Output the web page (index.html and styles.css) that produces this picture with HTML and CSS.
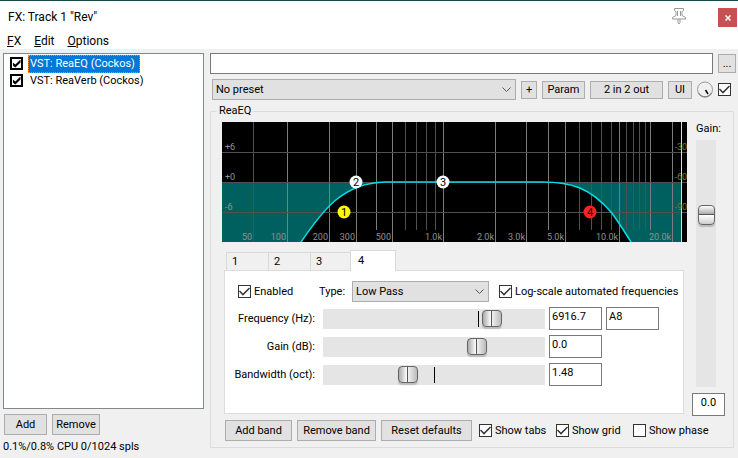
FILE: index.html
```
<!DOCTYPE html>
<html lang="en">

<head>
  <meta charset="UTF-8"/>
  <meta name="viewport" content="width=device-width, initial-scale=1"/>
  <title>FX: Track 1 "Rev"</title>

  <link rel="stylesheet" href="styles.css">
</head>

<body>
<header class="titlebar">
  <h1>FX: Track 1 "Rev"</h1>
  <svg class="pin" width="16" height="17" viewBox="0 0 16 17">
    <path d="M3.500 .5h9v2l-1.500 1v4l3.500 2v1.500h-13v-1.500l3.500-2v-4l-1.500-1zM7 11v3.500l1 1.500 1-1.500V11M6.500 3v5M9.500 3v5" fill="#fff" stroke="#999"/>
  </svg>
  <button type="button" class="close" aria-label="Close">
    <svg width="6" height="6" viewBox="0 0 6 6"><path d="M.5 .5l5 5M5.500 .5l-5 5" stroke="#fff" stroke-width="1.500"/></svg>
  </button>
</header>

<nav class="menu">
  <a href="#"><u>F</u>X</a>
  <a href="#"><u>E</u>dit</a>
  <a href="#"><u>O</u>ptions</a>
</nav>

<main>
  <section class="chain">
    <ul class="fx-list">
      <li><input type="checkbox" id="fx1" class="bold" checked><label for="fx1" class="selected">VST: ReaEQ (Cockos)</label></li>
      <li><input type="checkbox" id="fx2" class="bold" checked><label for="fx2">VST: ReaVerb (Cockos)</label></li>
    </ul>
    <div class="chain-buttons">
      <button type="button" class="add">Add</button>
      <button type="button" class="remove">Remove</button>
    </div>
    <p class="status">0.1%/0.8% CPU 0/1024 spls</p>
  </section>

  <section class="plugin">
    <div class="comment-row">
      <input type="text" aria-label="Comment">
      <button type="button">...</button>
    </div>

    <div class="preset-row">
      <select aria-label="Preset"><option>No preset</option></select>
      <button type="button" class="plus">+</button>
      <button type="button" class="param">Param</button>
      <button type="button" class="pins">2 in 2 out</button>
      <button type="button" class="ui">UI</button>
      <svg class="knob" width="16" height="18" viewBox="0 0 16 18">
        <circle cx="8" cy="8.500" r="7.500" fill="#f0f0f0" stroke="#999"/>
        <path d="M1.500 12a7.500 7.500 0 0 0 13 0" fill="none" stroke="#888" stroke-width="1.500"/>
        <path d="M8.500 9l2.500 4" stroke="#000" stroke-width="1.500"/>
      </svg>
      <input type="checkbox" aria-label="Enable plugin" checked>
    </div>

    <fieldset>
      <legend>ReaEQ</legend>
      <div class="eq">
        <div class="eq-main">
          <svg class="graph" viewBox="0 0 465 120">
            <rect width="465" height="120" fill="#000"/>
            <!-- attenuated areas -->
            <path d="M0 60H163C118 61 98 93 79 120H0zM320 60H459V120H409C402 109 396 99 389 90C368 66 350 60 320 60z" fill="#006060"/>
            <!-- frequency grid -->
            <path class="minor" d="M183.500 0V108M194.500 0V108M204.500 0V108M213.500 0V108M357.500 0V108M369.500 0V108M379.500 0V108M389.500 0V108M404.500 0V108M411.500 0V108M417.500 0V108M423.500 0V108"/>
            <path class="major" d="M65.500 0V120M107.500 0V120M134.500 0V120M154.500 0V108M170.500 0V120M221.500 0V120M273.500 0V120M304.500 0V120M326.500 0V108M343.500 0V120M397.500 0V120M428.500 0V108M450.500 0V120"/>
            <path class="minor" d="M31.500 0V120M0 30.500H465M0 60.500H465M0 90.500H465"/>
            <path d="M459.500 0V120" stroke="#ddd"/>
            <!-- response -->
            <path class="curve" d="M79 120C98 93 118 61 163 60H320C350 60 368 66 389 90C396 99 402 109 409 120"/>
            <g class="scale">
              <text x="3" y="28">+6</text>
              <text x="3" y="58">+0</text>
              <text x="3" y="88">-6</text>
              <text x="30" y="118" class="end">50</text>
              <text x="64" y="118" class="end">100</text>
              <text x="106" y="118" class="end">200</text>
              <text x="133" y="118" class="end">300</text>
              <text x="169" y="118" class="end">500</text>
              <text x="220" y="118" class="end">1.0k</text>
              <text x="272" y="118" class="end">2.0k</text>
              <text x="303" y="118" class="end">3.0k</text>
              <text x="342" y="118" class="end">5.0k</text>
              <text x="396" y="118" class="end">10.0k</text>
              <text x="449" y="118" class="end">20.0k</text>
            </g>
            <g class="scale phase">
              <text x="465" y="28" class="end">-30</text>
              <text x="465" y="58" class="end">-60</text>
              <text x="465" y="88" class="end">-90</text>
            </g>
            <g class="handles">
              <circle cx="122" cy="90" r="6.500" fill="#ff0"/><text x="122" y="94">1</text>
              <circle cx="134" cy="60" r="6.500" fill="#fff"/><text x="134" y="64">2</text>
              <circle cx="221" cy="60" r="6.500" fill="#fff"/><text x="221" y="64">3</text>
              <circle cx="368" cy="90" r="6.500" fill="#f22"/><text x="368" y="94">4</text>
            </g>
          </svg>

          <div class="tabs" role="tablist">
            <button type="button" role="tab">1</button>
            <button type="button" role="tab">2</button>
            <button type="button" role="tab">3</button>
            <button type="button" role="tab" class="active" aria-selected="true">4</button>
          </div>

          <div class="band">
            <div class="band-top">
              <div class="check enabled"><input type="checkbox" id="enabled" checked><label for="enabled">Enabled</label></div>
              <label for="type" class="type">Type:</label>
              <select id="type"><option>Low Pass</option></select>
              <div class="check"><input type="checkbox" id="log" checked><label for="log">Log-scale automated frequencies</label></div>
            </div>
            <div class="band-row">
              <label for="freq">Frequency (Hz):</label>
              <input type="range" id="freq" class="mark-high" min="0" max="1000" value="787">
              <input type="text" value="6916.7" aria-label="Frequency value">
              <input type="text" value="A8" aria-label="Note">
            </div>
            <div class="band-row">
              <label for="gain">Gain (dB):</label>
              <input type="range" id="gain" class="mark-high" min="0" max="1000" value="713">
              <input type="text" value="0.0" aria-label="Gain value">
            </div>
            <div class="band-row">
              <label for="bw">Bandwidth (oct):</label>
              <input type="range" id="bw" class="mark-mid" min="0" max="1000" value="369">
              <input type="text" value="1.48" aria-label="Bandwidth value">
            </div>
          </div>

          <div class="band-actions">
            <button type="button" class="add-band">Add band</button>
            <button type="button" class="remove-band">Remove band</button>
            <button type="button" class="reset">Reset defaults</button>
            <div class="check"><input type="checkbox" id="tabs" checked><label for="tabs">Show tabs</label></div>
            <div class="check"><input type="checkbox" id="grid" checked><label for="grid">Show grid</label></div>
            <div class="check"><input type="checkbox" id="phase"><label for="phase">Show phase</label></div>
          </div>
        </div>

        <div class="master">
          <label for="master">Gain:</label>
          <input type="range" id="master" class="vertical" min="0" max="1000" value="714">
          <input type="text" value="0.0" aria-label="Master gain value">
        </div>
      </div>
    </fieldset>
  </section>
</main>
</body>

</html>
```
FILE: styles.css
```
* {
    box-sizing: border-box;
}

body {
    display: flex;
    flex-direction: column;
    min-height: 100vh;
    margin: 0;
    border-top: 1px solid #1d4a4a;
    background: #f0f0f0;
    color: #000;
    font: 11px/14px Roboto, sans-serif;
}

button,
input,
select {
    margin: 0;
    font: inherit;
    color: inherit;
}

/* title and menu */
.titlebar {
    display: flex;
    align-items: center;
    height: 31px;
    padding: 0 1px 0 8px;
    background: #fff;
}

h1 {
    flex: 1;
    margin: 0;
    font: 12px/16px Roboto, sans-serif;
}

.pin {
    margin-right: 31px;
}

.close {
    display: flex;
    align-items: center;
    justify-content: center;
    width: 19px;
    height: 19px;
    margin-top: 2px;
    padding: 0;
    border: 0;
    background: #c75050;
}

.menu {
    display: flex;
    gap: 13px;
    height: 17px;
    padding-left: 7px;
    background: #fff;
    font: 12px/19px Roboto, sans-serif;
}

.menu a {
    color: #000;
    text-decoration: none;
}

/* common controls */
button {
    padding: 0;
    border: 1px solid #adadad;
    background: #e1e1e1;
    white-space: nowrap;
}

input[type="text"] {
    min-width: 0;
    border: 1px solid #7a7a7a;
    background: #fff;
    padding: 0 2px 4px;
}

select {
    appearance: none;
    height: 21px;
    padding: 0 3px;
    border: 1px solid #adadad;
    border-radius: 0;
    background: #e1e1e1 url("data:image/svg+xml,%3Csvg xmlns='http://www.w3.org/2000/svg' width='9' height='6'%3E%3Cpath d='M.5 .5l4 4 4-4' fill='none' stroke='%23555'/%3E%3C/svg%3E") no-repeat right 4px center;
}

input[type="checkbox"] {
    appearance: none;
    flex: none;
    display: grid;
    place-items: center;
    width: 13px;
    height: 13px;
    border: 1px solid #333;
    background: #fff;
}

input[type="checkbox"]:checked::before {
    content: "";
    width: 11px;
    height: 9px;
    background: #333;
    clip-path: polygon(0 50%, 9% 38%, 36% 72%, 91% 5%, 100% 16%, 36% 96%);
}

input.bold {
    border-width: 2px;
    border-color: #000;
}

input.bold:checked::before {
    width: 8px;
    height: 8px;
    background: #000;
    clip-path: polygon(0 35%, 36% 62%, 100% 0, 100% 38%, 36% 100%, 0 72%);
}

.check {
    display: flex;
    align-items: center;
    gap: 3px;
    white-space: nowrap;
}

/* sliders */
input[type="range"] {
    appearance: none;
    width: 100%;
    height: 20px;
    background: #e5e5e5;
}

input.mark-high {
    background: linear-gradient(#000, #000) 70% center / 1px 16px no-repeat #e5e5e5;
}

input.mark-mid {
    background: linear-gradient(#000, #000) 50% center / 1px 16px no-repeat #e5e5e5;
}

input[type="range"]::-webkit-slider-thumb {
    appearance: none;
    width: 20px;
    height: 17px;
    border: 1px solid #666;
    border-radius: 4px;
    background: linear-gradient(90deg, #aaa, #fff 45%, #555 45%, #555 52%, #eee 52%, #bbb);
    box-shadow: 0 2px 1px #bbb;
}

input[type="range"].vertical {
    writing-mode: vertical-lr;
    direction: rtl;
    width: 20px;
    height: auto;
    flex: 1;
}

input[type="range"].vertical::-webkit-slider-thumb {
    width: 17px;
    height: 20px;
    background: linear-gradient(#fff, #aaa 45%, #555 45%, #555 52%, #fff 52%, #ccc);
}

/* layout */
main {
    flex: 1;
    display: grid;
    grid-template-columns: 201px minmax(0, 1fr);
    column-gap: 6px;
    padding: 4px 2px 0 3px;
}

.chain,
.plugin {
    display: flex;
    flex-direction: column;
}

.fx-list {
    flex: 1;
    margin: 0;
    padding: 1px 6px;
    border: 1px solid #828790;
    background: #fff;
    list-style: none;
}

.fx-list li {
    display: flex;
    align-items: center;
    gap: 5px;
    height: 17px;
}

.fx-list label {
    padding: 1px 4px 1px 1px;
    border: 1px solid transparent;
}

.fx-list .selected {
    border: 1px dotted #ff8728;
    background: #0078d7;
    color: #fff;
}

.chain-buttons {
    display: flex;
    gap: 5px;
    padding: 5px 1px;
}

.chain-buttons button,
.band-actions button {
    height: 21px;
}

.add {
    width: 43px;
}

.remove {
    width: 48px;
}

.status {
    margin: 0;
    padding-bottom: 4px;
}

.comment-row,
.preset-row {
    display: flex;
    align-items: center;
    gap: 5px;
}

.comment-row input {
    flex: 1;
    height: 21px;
}

.comment-row button {
    width: 18px;
    height: 19px;
}

.preset-row {
    margin: 5px 0 4px;
    padding: 0 5px 0 2px;
}

.preset-row select {
    flex: 1;
}

.preset-row button {
    height: 18px;
}

.plus {
    width: 16px;
}

.param {
    width: 43px;
}

.pins {
    width: 73px;
}

.ui {
    width: 24px;
}

fieldset {
    flex: 1;
    min-width: 0;
    margin: 0 2px 10px 0;
    padding: 4px 8px 6px 11px;
    border: 1px solid #dcdcdc;
}

legend {
    margin-left: -5px;
    padding: 0 2px;
}

.eq {
    display: flex;
    gap: 5px;
    height: 100%;
}

.eq-main {
    flex: 1;
    min-width: 0;
    display: flex;
    flex-direction: column;
}

/* graph */
.graph {
    display: block;
    width: 100%;
    margin-bottom: 8px;
}

.minor {
    stroke: #505050;
}

.major {
    stroke: #7c7c7c;
}

.curve {
    fill: none;
    stroke: #00e0e6;
    stroke-width: 1.5;
}

.scale {
    fill: #929292;
    font-size: 9px;
}

.phase {
    fill: #7c7c1c;
}

.end {
    text-anchor: end;
}

.handles {
    fill: #000;
    font-size: 11px;
    text-anchor: middle;
}

/* band tabs */
.tabs {
    display: flex;
    align-items: flex-end;
    height: 20px;
    padding-left: 4px;
}

.tabs button {
    width: 42px;
    height: 18px;
    padding-left: 5px;
    border: 1px solid #d9d9d9;
    border-width: 1px 0 0 1px;
    background: #f0f0f0;
    text-align: left;
}

.tabs .active {
    width: 46px;
    height: 21px;
    margin-left: -2px;
    margin-bottom: -1px;
    padding-left: 7px;
    border-right-width: 1px;
    background: #fff;
    z-index: 1;
}

.band {
    flex: 1;
    margin: 0 3px 6px 2px;
    padding: 10px 24px 0 0;
    border: 1px solid #dcdcdc;
    background: #fff;
}

.band-top {
    display: flex;
    align-items: center;
    padding-left: 13px;
    margin-right: -20px;
}

.enabled {
    width: 81px;
}

.type {
    width: 33px;
}

.band-top select {
    width: 137px;
    margin-right: 10px;
}

.band-row {
    display: grid;
    grid-template-columns: 94px 1fr 53px 53px;
    align-items: center;
    column-gap: 4px;
    margin-top: 5px;
}

.band-row label {
    padding-right: 4px;
    text-align: right;
}

.band-row input[type="text"] {
    height: 23px;
}

.band-actions {
    display: flex;
    padding-left: 3px;
}

.band-actions > * {
    flex: none;
}

.band-actions button {
    margin-right: 5px;
}

.add-band {
    width: 67px;
}

.remove-band {
    width: 79px;
}

.band-actions .reset {
    width: 91px;
    margin-right: 7px;
}

.band-actions .check {
    width: 77px;
}

/* output gain */
.master {
    display: flex;
    flex-direction: column;
    align-items: center;
    width: 33px;
    padding-bottom: 25px;
}

.master input[type="range"] {
    margin: 4px 5px 6px 0;
}

.master input[type="text"] {
    width: 33px;
    height: 23px;
    text-align: center;
}
```
